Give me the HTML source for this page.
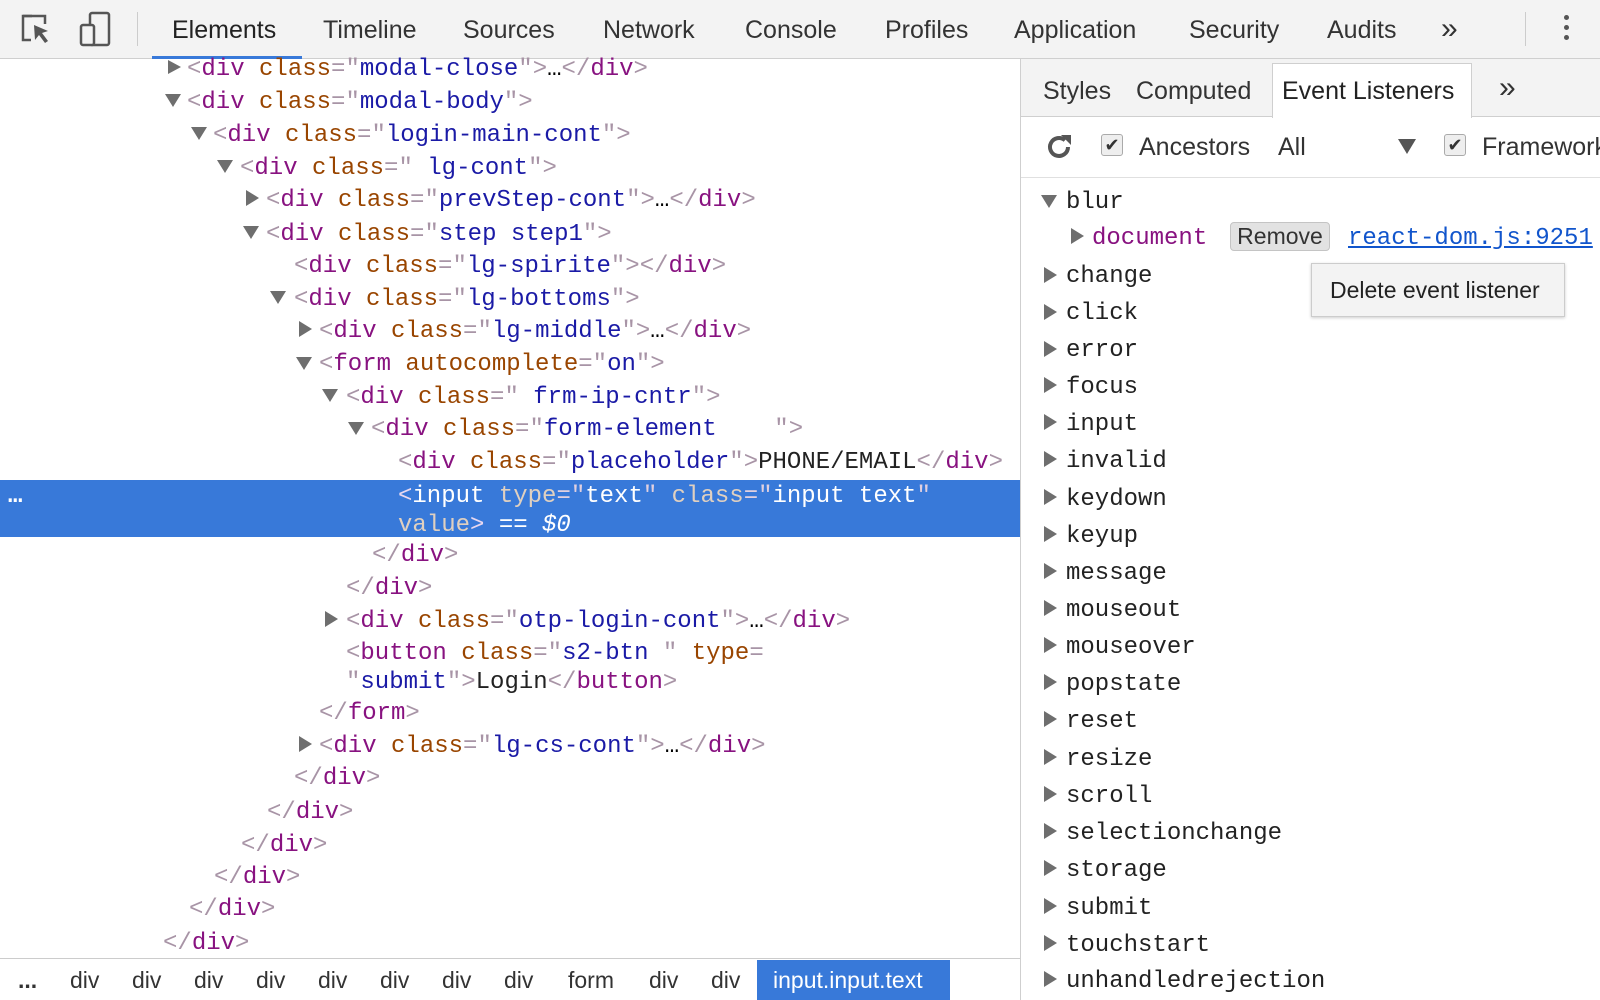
<!DOCTYPE html>
<html><head><meta charset="utf-8"><style>
*{margin:0;padding:0;box-sizing:border-box}
body{width:1600px;height:1000px;overflow:hidden;background:#fff;font-family:"Liberation Sans",sans-serif;position:relative}
.top{position:absolute;left:0;top:0;width:1600px;height:59px;background:#f3f3f3;border-bottom:1px solid #cfcfcf}
.tab{position:absolute;top:13px;font-size:25px;color:#333;margin-top:3px}
.code{position:absolute;font-family:"Liberation Mono",monospace;font-size:24px;white-space:pre;line-height:32px;height:32px;margin-top:3px}
.t{color:#881280}.b{color:#a894a6}.a{color:#994500}.v{color:#1a1aa6}.x{color:#222}
.tri{position:absolute;width:0;height:0}
.down{border-left:8px solid transparent;border-right:8px solid transparent;border-top:13px solid #6e6e6e}
.right{border-top:8px solid transparent;border-bottom:8px solid transparent;border-left:13px solid #6e6e6e}
.sel{position:absolute;left:0;top:480px;width:1020px;height:57px;background:#3879d9}
.rp{position:absolute;left:1020px;top:59px;width:580px;height:941px;border-left:1px solid #cfcfcf;background:#fff}
.ev{position:absolute;left:1066px;font-family:"Liberation Mono",monospace;font-size:24px;color:#222;line-height:32px;margin-top:3px}
.bc{position:absolute;top:964px;font-size:23px;color:#333;margin-top:3px}
.rt{margin-top:3px}
</style></head><body>
<div class="top">
<svg style="position:absolute;left:20px;top:14px" width="34" height="32" viewBox="0 0 34 32"><path d="M12 2H3v24h8" fill="none" stroke="#555" stroke-width="2.5"/><path d="M3 2h22v8" fill="none" stroke="#555" stroke-width="2.5"/><path d="M14 11l14 6-6 2 6 8-3 2-6-8-4 5z" fill="#555"/></svg>
<svg style="position:absolute;left:79px;top:11px" width="32" height="36" viewBox="0 0 32 36"><rect x="11" y="2" width="19" height="32" rx="2" fill="none" stroke="#555" stroke-width="2.5"/><rect x="2" y="14" width="13" height="20" rx="2" fill="#f3f3f3" stroke="#555" stroke-width="2.5"/></svg>
<div style="position:absolute;left:137px;top:12px;width:1px;height:34px;background:#ccc"></div>
<div class="tab" style="left:172px;color:#222">Elements</div>
<div class="tab" style="left:323px">Timeline</div>
<div class="tab" style="left:463px">Sources</div>
<div class="tab" style="left:603px">Network</div>
<div class="tab" style="left:745px">Console</div>
<div class="tab" style="left:885px">Profiles</div>
<div class="tab" style="left:1014px">Application</div>
<div class="tab" style="left:1189px">Security</div>
<div class="tab" style="left:1327px">Audits</div>
<div class="tab" style="left:1441px;top:9px;font-size:30px">»</div>
<div style="position:absolute;left:1525px;top:12px;width:1px;height:34px;background:#ccc"></div>
<div style="position:absolute;left:1564px;top:15px;width:5px;height:5px;border-radius:3px;background:#555;box-shadow:0 10px 0 #555,0 20px 0 #555"></div>
<div style="position:absolute;left:152px;top:56px;width:150px;height:3px;background:#3879d9"></div>
</div>

<div class="sel"></div>
<div class="code" style="left:8px;top:478px;color:#fff;font-weight:bold">…</div>

<div class="tri right" style="left:168px;top:60px;border-top-width:7px;border-bottom-width:7px"></div>
<div class="code" style="left:187px;top:51px"><span class="b">&lt;</span><span class="t">div</span> <span class="a">class</span><span class="b">="</span><span class="v">modal-close</span><span class="b">"&gt;</span>…<span class="b">&lt;/</span><span class="t">div</span><span class="b">&gt;</span></div>
<div class="tri down" style="left:165px;top:94px"></div>
<div class="code" style="left:187px;top:84px"><span class="b">&lt;</span><span class="t">div</span> <span class="a">class</span><span class="b">="</span><span class="v">modal-body</span><span class="b">"&gt;</span></div>
<div class="tri down" style="left:191px;top:127px"></div>
<div class="code" style="left:213px;top:117px"><span class="b">&lt;</span><span class="t">div</span> <span class="a">class</span><span class="b">="</span><span class="v">login-main-cont</span><span class="b">"&gt;</span></div>
<div class="tri down" style="left:217px;top:160px"></div>
<div class="code" style="left:240px;top:150px"><span class="b">&lt;</span><span class="t">div</span> <span class="a">class</span><span class="b">="</span><span class="v"> lg-cont</span><span class="b">"&gt;</span></div>
<div class="tri right" style="left:246px;top:190px"></div>
<div class="code" style="left:266px;top:182px"><span class="b">&lt;</span><span class="t">div</span> <span class="a">class</span><span class="b">="</span><span class="v">prevStep-cont</span><span class="b">"&gt;</span>…<span class="b">&lt;/</span><span class="t">div</span><span class="b">&gt;</span></div>
<div class="tri down" style="left:243px;top:226px"></div>
<div class="code" style="left:266px;top:216px"><span class="b">&lt;</span><span class="t">div</span> <span class="a">class</span><span class="b">="</span><span class="v">step step1</span><span class="b">"&gt;</span></div>
<div class="code" style="left:294px;top:248px"><span class="b">&lt;</span><span class="t">div</span> <span class="a">class</span><span class="b">="</span><span class="v">lg-spirite</span><span class="b">"&gt;&lt;/</span><span class="t">div</span><span class="b">&gt;</span></div>
<div class="tri down" style="left:270px;top:291px"></div>
<div class="code" style="left:294px;top:281px"><span class="b">&lt;</span><span class="t">div</span> <span class="a">class</span><span class="b">="</span><span class="v">lg-bottoms</span><span class="b">"&gt;</span></div>
<div class="tri right" style="left:299px;top:321px"></div>
<div class="code" style="left:319px;top:313px"><span class="b">&lt;</span><span class="t">div</span> <span class="a">class</span><span class="b">="</span><span class="v">lg-middle</span><span class="b">"&gt;</span>…<span class="b">&lt;/</span><span class="t">div</span><span class="b">&gt;</span></div>
<div class="tri down" style="left:296px;top:357px"></div>
<div class="code" style="left:319px;top:346px"><span class="b">&lt;</span><span class="t">form</span> <span class="a">autocomplete</span><span class="b">="</span><span class="v">on</span><span class="b">"&gt;</span></div>
<div class="tri down" style="left:322px;top:389px"></div>
<div class="code" style="left:346px;top:379px"><span class="b">&lt;</span><span class="t">div</span> <span class="a">class</span><span class="b">="</span><span class="v"> frm-ip-cntr</span><span class="b">"&gt;</span></div>
<div class="tri down" style="left:348px;top:422px"></div>
<div class="code" style="left:371px;top:411px"><span class="b">&lt;</span><span class="t">div</span> <span class="a">class</span><span class="b">="</span><span class="v">form-element    </span><span class="b">"&gt;</span></div>
<div class="code" style="left:398px;top:444px"><span class="b">&lt;</span><span class="t">div</span> <span class="a">class</span><span class="b">="</span><span class="v">placeholder</span><span class="b">"&gt;</span><span class="x">PHONE/EMAIL</span><span class="b">&lt;/</span><span class="t">div</span><span class="b">&gt;</span></div>
<div class="code" style="left:398px;top:478px;color:#fff"><span style="color:#e8d8f0">&lt;</span>input <span style="color:#e0d0c0">type</span><span style="color:#e0d0e0">="</span>text<span style="color:#e0d0e0">"</span> <span style="color:#e0d0c0">class</span><span style="color:#e0d0e0">="</span>input text<span style="color:#e0d0e0">"</span></div>
<div class="code" style="left:398px;top:507px;color:#fff"><span style="color:#e0d0c0">value</span><span style="color:#e8d8f0">&gt;</span> == <i>$0</i></div>
<div class="code" style="left:372px;top:537px"><span class="b">&lt;/</span><span class="t">div</span><span class="b">&gt;</span></div>
<div class="code" style="left:346px;top:570px"><span class="b">&lt;/</span><span class="t">div</span><span class="b">&gt;</span></div>
<div class="tri right" style="left:325px;top:611px"></div>
<div class="code" style="left:346px;top:603px"><span class="b">&lt;</span><span class="t">div</span> <span class="a">class</span><span class="b">="</span><span class="v">otp-login-cont</span><span class="b">"&gt;</span>…<span class="b">&lt;/</span><span class="t">div</span><span class="b">&gt;</span></div>
<div class="code" style="left:346px;top:635px"><span class="b">&lt;</span><span class="t">button</span> <span class="a">class</span><span class="b">="</span><span class="v">s2-btn </span><span class="b">"</span> <span class="a">type</span><span class="b">=</span></div>
<div class="code" style="left:346px;top:664px"><span class="b">"</span><span class="v">submit</span><span class="b">"&gt;</span><span class="x">Login</span><span class="b">&lt;/</span><span class="t">button</span><span class="b">&gt;</span></div>
<div class="code" style="left:319px;top:695px"><span class="b">&lt;/</span><span class="t">form</span><span class="b">&gt;</span></div>
<div class="tri right" style="left:299px;top:736px"></div>
<div class="code" style="left:319px;top:728px"><span class="b">&lt;</span><span class="t">div</span> <span class="a">class</span><span class="b">="</span><span class="v">lg-cs-cont</span><span class="b">"&gt;</span>…<span class="b">&lt;/</span><span class="t">div</span><span class="b">&gt;</span></div>
<div class="code" style="left:294px;top:760px"><span class="b">&lt;/</span><span class="t">div</span><span class="b">&gt;</span></div>
<div class="code" style="left:267px;top:794px"><span class="b">&lt;/</span><span class="t">div</span><span class="b">&gt;</span></div>
<div class="code" style="left:241px;top:827px"><span class="b">&lt;/</span><span class="t">div</span><span class="b">&gt;</span></div>
<div class="code" style="left:214px;top:859px"><span class="b">&lt;/</span><span class="t">div</span><span class="b">&gt;</span></div>
<div class="code" style="left:189px;top:891px"><span class="b">&lt;/</span><span class="t">div</span><span class="b">&gt;</span></div>
<div class="code" style="left:163px;top:925px"><span class="b">&lt;/</span><span class="t">div</span><span class="b">&gt;</span></div>

<div style="position:absolute;left:0;top:958px;width:1020px;height:42px;background:#fff;border-top:1px solid #ccc"></div>
<div class="bc" style="left:18px;font-weight:bold">...</div>
<div class="bc" style="left:70px">div</div><div class="bc" style="left:132px">div</div><div class="bc" style="left:194px">div</div><div class="bc" style="left:256px">div</div><div class="bc" style="left:318px">div</div><div class="bc" style="left:380px">div</div><div class="bc" style="left:442px">div</div><div class="bc" style="left:504px">div</div><div class="bc" style="left:568px">form</div><div class="bc" style="left:649px">div</div><div class="bc" style="left:711px">div</div>
<div style="position:absolute;left:757px;top:960px;width:193px;height:40px;background:#3879d9"></div>
<div class="bc" style="left:773px;color:#fff">input.input.text</div>

<div class="rp">
<div style="position:absolute;left:0;top:0;width:580px;height:58px;background:#f3f3f3;border-bottom:1px solid #cfcfcf"></div>
<div style="position:absolute;left:251px;top:4px;width:200px;height:55px;background:#fff;border:1px solid #cfcfcf;border-bottom:none"></div>
<div class="tab" style="left:22px;top:15px;font-size:25px">Styles</div>
<div class="tab" style="left:115px;top:15px;font-size:25px">Computed</div>
<div class="tab" style="left:261px;top:15px;font-size:25px;color:#222">Event Listeners</div>
<div class="tab" style="left:478px;top:9px;font-size:30px">»</div>
<div style="position:absolute;left:0;top:118px;width:580px;height:1px;background:#e0e0e0"></div>
<svg style="position:absolute;left:23px;top:73px" width="30" height="30" viewBox="0 0 30 30"><path d="M24 15a9 9 0 1 1-3-6.7" fill="none" stroke="#555" stroke-width="4"/><path d="M17 3h10v10z" fill="#555"/></svg>
<div style="position:absolute;left:80px;top:75px;width:22px;height:22px;border:1px solid #aaa;border-radius:3px;background:#eee;font-size:18px;line-height:20px;text-align:center;color:#333">✔</div>
<div class="rt" style="position:absolute;left:118px;top:71px;font-size:25px;color:#333">Ancestors</div>
<div class="rt" style="position:absolute;left:257px;top:71px;font-size:25px;color:#333">All</div>
<div style="position:absolute;left:377px;top:80px;width:0;height:0;border-left:9px solid transparent;border-right:9px solid transparent;border-top:15px solid #555"></div>
<div style="position:absolute;left:423px;top:75px;width:22px;height:22px;border:1px solid #aaa;border-radius:3px;background:#eee;font-size:18px;line-height:20px;text-align:center;color:#333">✔</div>
<div class="rt" style="position:absolute;left:461px;top:71px;font-size:25px;color:#333;white-space:nowrap">Framework</div>
</div>

<div class="tri down" style="left:1041px;top:195px"></div>
<div class="ev" style="top:184px">blur</div>
<div class="tri right" style="left:1071px;top:228px"></div>
<div class="ev" style="left:1092px;top:220px;color:#881280">document</div>
<div style="position:absolute;left:1230px;top:222px;width:100px;height:29px;background:#e2e2e2;border:1px solid #c4c4c4;border-radius:4px;font-size:23px;line-height:27px;text-align:center;color:#333;font-family:'Liberation Sans',sans-serif">Remove</div>
<div class="ev" style="left:1348px;top:220px;color:#1155cc;text-decoration:underline">react-dom.js:9251</div>
<div style="position:absolute;left:1311px;top:263px;width:254px;height:54px;background:#f3f3f3;border:1px solid #ccc;box-shadow:0 1px 3px rgba(0,0,0,.2);font-size:23px;line-height:52px;padding-left:18px;color:#222">Delete event listener</div>
<div class="tri right" style="left:1044px;top:267px"></div><div class="ev" style="top:258px">change</div>
<div class="tri right" style="left:1044px;top:304px"></div><div class="ev" style="top:295px">click</div>
<div class="tri right" style="left:1044px;top:341px"></div><div class="ev" style="top:332px">error</div>
<div class="tri right" style="left:1044px;top:377px"></div><div class="ev" style="top:369px">focus</div>
<div class="tri right" style="left:1044px;top:414px"></div><div class="ev" style="top:406px">input</div>
<div class="tri right" style="left:1044px;top:451px"></div><div class="ev" style="top:443px">invalid</div>
<div class="tri right" style="left:1044px;top:489px"></div><div class="ev" style="top:481px">keydown</div>
<div class="tri right" style="left:1044px;top:526px"></div><div class="ev" style="top:518px">keyup</div>
<div class="tri right" style="left:1044px;top:563px"></div><div class="ev" style="top:555px">message</div>
<div class="tri right" style="left:1044px;top:600px"></div><div class="ev" style="top:592px">mouseout</div>
<div class="tri right" style="left:1044px;top:637px"></div><div class="ev" style="top:629px">mouseover</div>
<div class="tri right" style="left:1044px;top:674px"></div><div class="ev" style="top:666px">popstate</div>
<div class="tri right" style="left:1044px;top:711px"></div><div class="ev" style="top:703px">reset</div>
<div class="tri right" style="left:1044px;top:749px"></div><div class="ev" style="top:741px">resize</div>
<div class="tri right" style="left:1044px;top:786px"></div><div class="ev" style="top:778px">scroll</div>
<div class="tri right" style="left:1044px;top:823px"></div><div class="ev" style="top:815px">selectionchange</div>
<div class="tri right" style="left:1044px;top:860px"></div><div class="ev" style="top:852px">storage</div>
<div class="tri right" style="left:1044px;top:898px"></div><div class="ev" style="top:890px">submit</div>
<div class="tri right" style="left:1044px;top:935px"></div><div class="ev" style="top:927px">touchstart</div>
<div class="tri right" style="left:1044px;top:971px"></div><div class="ev" style="top:963px">unhandledrejection</div>
</body></html>
